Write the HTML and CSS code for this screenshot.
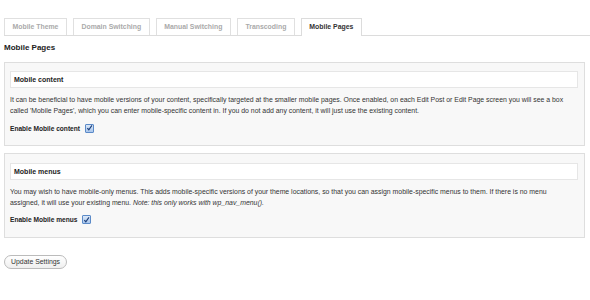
FILE: index.html
```html
<!DOCTYPE html>
<html lang="en">
<head>
    <meta charset="UTF-8">
    <title>Mobile Pages</title>
    <link rel="stylesheet" href="styles.css">
</head>
<body>
    <div class="wrap">
        <!-- Tabs -->
        <div class="nav-tabs">
            <a class="nav-tab" href="#">Mobile Theme</a>
            <a class="nav-tab" href="#">Domain Switching</a>
            <a class="nav-tab" href="#">Manual Switching</a>
            <a class="nav-tab" href="#">Transcoding</a>
            <a class="nav-tab active" href="#">Mobile Pages</a>
        </div>

        <h3 class="page-title">Mobile Pages</h3>

        <form>
            <!-- Mobile content -->
            <div class="panel">
                <div class="panel-head">Mobile content</div>
                <p>It can be beneficial to have mobile versions of your content, specifically targeted at the smaller mobile pages. Once enabled, on each Edit Post or Edit Page screen you will see a box called 'Mobile Pages', which you can enter mobile-specific content in. If you do not add any content, it will just use the existing content.</p>
                <label class="enable">Enable Mobile content
                    <span class="check">
                        <svg viewBox="0 0 8 8" width="8" height="8"><path d="M1.5 4.2 L3.2 6 L6.8 1" fill="none" stroke="#1d3f7a" stroke-width="1.3"/></svg>
                    </span>
                </label>
            </div>

            <!-- Mobile menus -->
            <div class="panel">
                <div class="panel-head">Mobile menus</div>
                <p>You may wish to have mobile-only menus. This adds mobile-specific versions of your theme locations, so that you can assign mobile-specific menus to them. If there is no menu assigned, it will use your existing menu. <em>Note: this only works with wp_nav_menu().</em></p>
                <label class="enable">Enable Mobile menus
                    <span class="check">
                        <svg viewBox="0 0 8 8" width="8" height="8"><path d="M1.5 4.2 L3.2 6 L6.8 1" fill="none" stroke="#1d3f7a" stroke-width="1.3"/></svg>
                    </span>
                </label>
            </div>

            <button type="submit" class="button">Update Settings</button>
        </form>
    </div>
</body>
</html>
```

FILE: styles.css
```css
body {
    margin: 0;
    font-family: 'Liberation Sans', Arial, sans-serif;
    color: #333;
    background: #fff;
}

.wrap {
    padding: 18px 0 0 4px;
}

.nav-tabs {
    display: flex;
    gap: 6px;
    border-bottom: 1px solid #dcdcdc;
    height: 17px;
}

.nav-tab {
    display: block;
    height: 16px;
    line-height: 16px;
    padding: 0 7.5px;
    border: 1px solid #e0e0e0;
    border-bottom: none;
    background: #fff;
    color: #aaa;
    font-size: 6.9px;
    font-weight: bold;
    text-decoration: none;
}

.nav-tab.active {
    color: #333;
    height: 17px;
    border-color: #dcdcdc;
    margin-bottom: -1px;
}

.page-title {
    font-size: 8px;
    font-weight: bold;
    margin: 7px 0 9px;
    line-height: 10px;
    color: #222;
}

.panel {
    width: 568px;
    background: #f8f8f8;
    border: 1px solid #dedede;
    padding: 8px 6px 11px 5px;
    margin-bottom: 7px;
}

.panel + .panel {
    padding-top: 9px;
    padding-bottom: 12px;
}

.panel-head {
    height: 15px;
    line-height: 15px;
    background: #fff;
    border: 1px solid #e6e6e6;
    padding: 0 3px;
    font-size: 7px;
    font-weight: bold;
    color: #222;
}

.panel p {
    margin: 6px 14px 6px 0;
    font-size: 6.9px;
    line-height: 11.3px;
    color: #333;
}

.enable {
    display: flex;
    align-items: center;
    gap: 5px;
    height: 11px;
    font-size: 6.6px;
    font-weight: bold;
    color: #222;
}

.check {
    display: flex;
    align-items: center;
    justify-content: center;
    width: 7px;
    height: 7px;
    border: 1px solid #5b8ac8;
    background: linear-gradient(#dbe8f8, #a9c6ec);
    border-radius: 1px;
}

.button {
    margin-top: 10px;
    height: 14px;
    padding: 0 6px;
    border: 1px solid #bbb;
    border-radius: 8px;
    background: linear-gradient(#fff, #efefef);
    font-family: 'Liberation Sans', Arial, sans-serif;
    font-size: 6.9px;
    color: #333;
    line-height: 12px;
}
```
